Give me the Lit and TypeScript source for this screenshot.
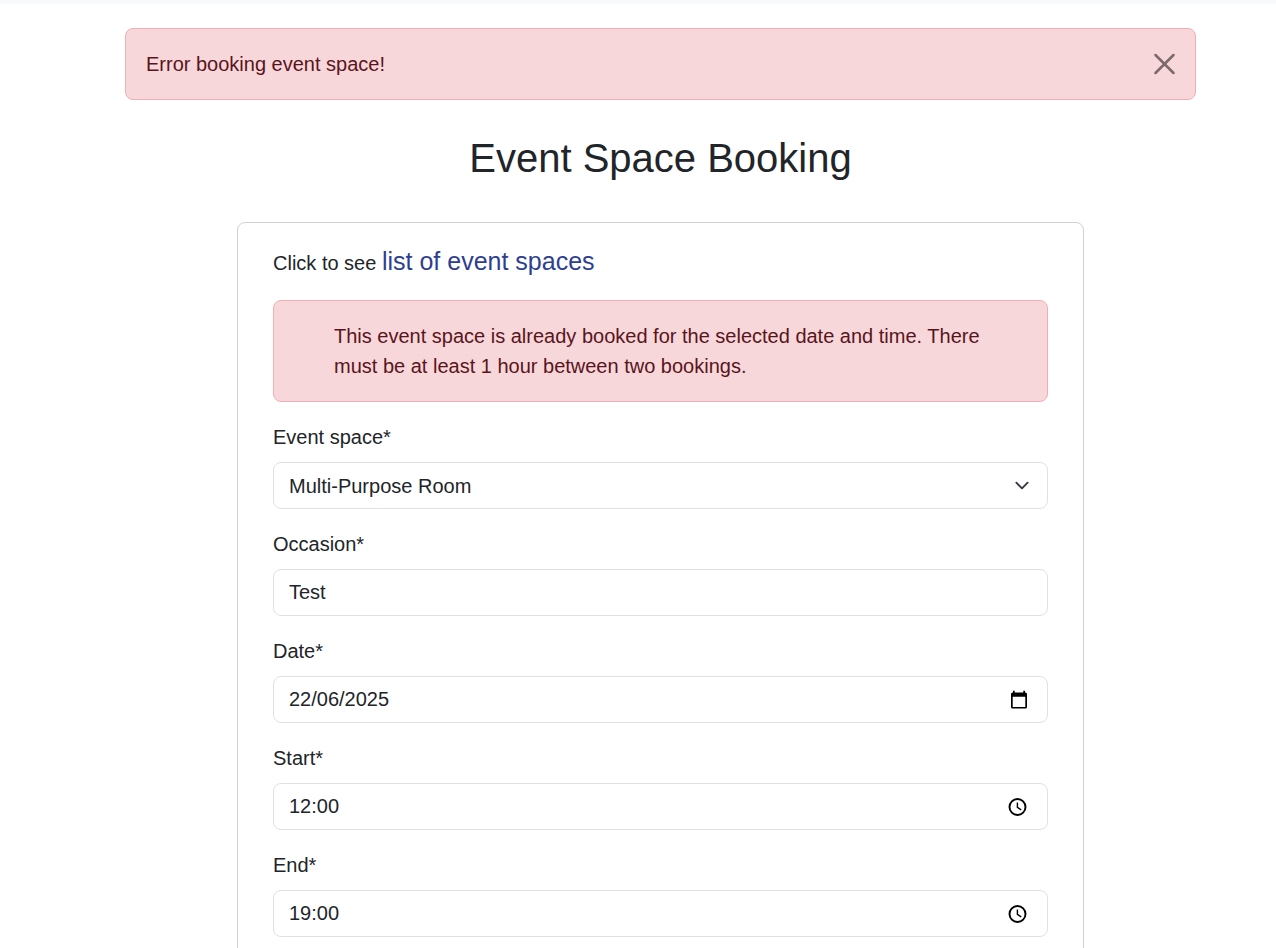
import { LitElement, html, css, svg } from "lit";
import { customElement, state } from "lit/decorators.js";

interface PickerField {
  id: string;
  label: string;
  value: string;
  icon: "calendar" | "clock";
  action: string;
}

const pickerFields: PickerField[] = [
  { id: "date", label: "Date*", value: "22/06/2025", icon: "calendar", action: "Choose date" },
  { id: "start", label: "Start*", value: "12:00", icon: "clock", action: "Choose start time" },
  { id: "end", label: "End*", value: "19:00", icon: "clock", action: "Choose end time" },
];

const icons = {
  calendar: svg`<path fill="currentColor" fill-rule="evenodd" d="M5 .8h1.700v1.700h8.600V.8H17v1.700h.5A1.500 1.500 0 0 1 19 4v13a1.500 1.500 0 0 1-1.500 1.500h-13A1.500 1.500 0 0 1 3 17V4a1.500 1.500 0 0 1 1.500-1.500H5zM4.700 6.800V17h12.600V6.800z"/>`,
  clock: svg`<circle cx="9.500" cy="10" r="8" fill="none" stroke="currentColor" stroke-width="1.900"/><path d="M9.400 5.400v5l3.800 2.400" fill="none" stroke="currentColor" stroke-width="1.400"/>`,
};

@customElement("app-root")
export class AppRoot extends LitElement {
  @state() private alertOpen = true;

  static styles = css`
    :host {
      display: block;
      box-sizing: border-box;
      height: 100vh;
      overflow-y: auto;
      scrollbar-width: none;
      background: #fff;
      border-top: 4px solid #f8f9fa;
      color: #212529;
      font: 20px/30px "Liberation Sans", Arial, sans-serif;
    }
    * {
      box-sizing: border-box;
    }
    .page {
      padding: 24px 0 24px 45px;
    }
    .container {
      max-width: 1071px;
      margin: 0 auto;
    }
    .alert {
      display: flex;
      align-items: center;
      justify-content: space-between;
      padding: 20px;
      border: 1px solid #f1aeb5;
      border-radius: 8px;
      background: #f8d7da;
      color: #58151c;
    }
    .close {
      display: flex;
      padding: 0;
      border: 0;
      background: none;
      color: #000;
      opacity: 0.5;
      cursor: pointer;
    }
    h1 {
      margin: 34px 0 40px;
      font-size: 40px;
      line-height: 48px;
      font-weight: 400;
      text-align: center;
    }
    .card {
      max-width: 847px;
      margin: 0 auto;
      padding: 20px 35px;
      border: 1px solid #d0d1d2;
      border-radius: 8px;
    }
    .intro {
      margin: 0 0 18px;
      line-height: 37px;
    }
    .intro a {
      color: #2e3f92;
      font-size: 25px;
      text-decoration: none;
    }
    .errors {
      margin: 0;
      padding: 0 0 0 40px;
      list-style: none;
    }
    form {
      display: grid;
      gap: 20px;
      margin-top: 20px;
    }
    .field {
      display: grid;
      gap: 10px;
    }
    .control {
      display: grid;
      align-items: center;
    }
    .control > * {
      grid-area: 1 / 1;
    }
    .input {
      width: 100%;
      height: 47px;
      margin: 0;
      padding: 0 15px;
      border: 1px solid #dee2e6;
      border-radius: 8px;
      background: #fff;
      color: inherit;
      font: inherit;
      appearance: none;
    }
    .chevron,
    .picker {
      justify-self: end;
      margin-right: 16px;
    }
    .chevron {
      pointer-events: none;
    }
    .picker {
      display: flex;
      margin-right: 20px;
      padding: 0;
      border: 0;
      background: none;
      color: #000;
      cursor: pointer;
    }
  `;

  private renderPicker(f: PickerField) {
    return html`
      <div class="field">
        <label for=${f.id}>${f.label}</label>
        <div class="control">
          <input class="input" id=${f.id} type="text" .value=${f.value} />
          <button class="picker" type="button" aria-label=${f.action}>
            <svg width="20" height="20" viewBox="0 0 20 20" aria-hidden="true">${icons[f.icon]}</svg>
          </button>
        </div>
      </div>
    `;
  }

  render() {
    return html`
      <main class="page">
        <div class="container">
          ${this.alertOpen
            ? html`<div class="alert" role="alert">
                <span>Error booking event space!</span>
                <button class="close" type="button" aria-label="Close" @click=${() => (this.alertOpen = false)}>
                  <svg width="20" height="20" viewBox="0 0 20 20" overflow="visible" aria-hidden="true">
                    <path d="M.5 1l18 18M18.500 1L.5 19" fill="none" stroke="currentColor" stroke-width="2.500" stroke-linecap="round" />
                  </svg>
                </button>
              </div>`
            : null}
          <h1>Event Space Booking</h1>
          <section class="card">
            <p class="intro">Click to see <a href="#spaces">list of event spaces</a></p>
            <div class="alert" role="alert">
              <ul class="errors">
                <li>
                  This event space is already booked for the selected date and time. There must be at least 1 hour
                  between two bookings.
                </li>
              </ul>
            </div>
            <form>
              <div class="field">
                <label for="space">Event space*</label>
                <div class="control">
                  <select class="input" id="space">
                    <option selected>Multi-Purpose Room</option>
                  </select>
                  <svg class="chevron" width="20" height="15" viewBox="0 0 16 16" aria-hidden="true">
                    <path d="m2 5 6 6 6-6" fill="none" stroke="#343a40" stroke-width="2" stroke-linecap="round" stroke-linejoin="round" />
                  </svg>
                </div>
              </div>
              <div class="field">
                <label for="occasion">Occasion*</label>
                <input class="input" id="occasion" type="text" .value=${"Test"} />
              </div>
              ${pickerFields.map((f) => this.renderPicker(f))}
            </form>
          </section>
        </div>
      </main>
    `;
  }
}
